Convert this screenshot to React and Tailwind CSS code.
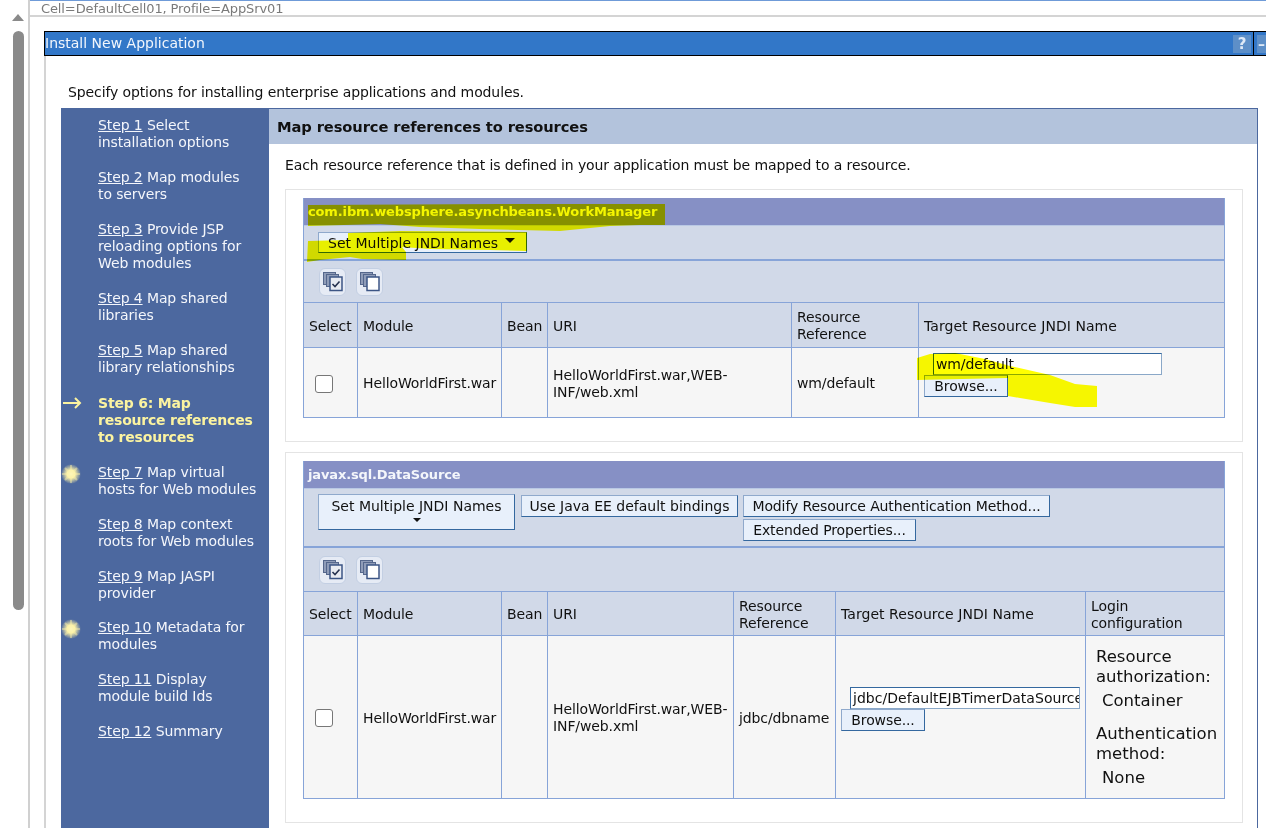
import React from 'react';

const steps = [
  { n: 'Step 1', lines: ['Select', 'installation options'] },
  { n: 'Step 2', lines: ['Map modules', 'to servers'] },
  { n: 'Step 3', lines: ['Provide JSP', 'reloading options for', 'Web modules'] },
  { n: 'Step 4', lines: ['Map shared', 'libraries'] },
  { n: 'Step 5', lines: ['Map shared', 'library relationships'] },
  { current: true, lines: ['Step 6: Map', 'resource references', 'to resources'] },
  { n: 'Step 7', lines: ['Map virtual', 'hosts for Web modules'], star: true },
  { n: 'Step 8', lines: ['Map context', 'roots for Web modules'] },
  { n: 'Step 9', lines: ['Map JASPI', 'provider'] },
  { n: 'Step 10', lines: ['Metadata for', 'modules'], star: true, tight: true },
  { n: 'Step 11', lines: ['Display', 'module build Ids'] },
  { n: 'Step 12', lines: ['Summary'] },
];

function Star() {
  return (
    <svg className="absolute left-[-38px] top-[-1px]" width="22" height="22" viewBox="0 0 22 22">
      <defs>
        <radialGradient id="glow">
          <stop offset="0%" stopColor="#fffcc8" />
          <stop offset="40%" stopColor="#fdf3a8" />
          <stop offset="100%" stopColor="#fdf3a8" stopOpacity="0" />
        </radialGradient>
      </defs>
      <circle cx="11" cy="11" r="10" fill="url(#glow)" />
      <path d="M11 2v18M2 11h18M5 5l12 12M17 5L5 17" stroke="#fbf0a8" strokeWidth="2" opacity="0.45" />
    </svg>
  );
}

function Sidebar() {
  return (
    <div className="w-[208px] shrink-0 bg-[#4c689f] pt-[9px] pl-[37px] flex flex-col gap-[18px] text-[#f4f6fb]">
      {steps.map((s, i) => (
        <div key={i} className={`relative leading-[17px] whitespace-nowrap ${s.current ? 'mt-px font-bold text-[#fbf3a0] tracking-[-0.2px]' : ''} ${s.tight ? '-mt-px' : ''}`}>
          {s.current && (
            <svg className="absolute left-[-37px] top-0" width="22" height="16" viewBox="0 0 22 16" fill="none" stroke="#fbf3a0" strokeWidth="2">
              <path d="M2 8h17M14 3l5 5-5 5" />
            </svg>
          )}
          {s.star && <Star />}
          {s.current ? (
            s.lines.map((l) => <div key={l}>{l}</div>)
          ) : (
            <>
              <div><span className="underline">{s.n}</span> {s.lines[0]}</div>
              {s.lines.slice(1).map((l) => <div key={l}>{l}</div>)}
            </>
          )}
        </div>
      ))}
    </div>
  );
}

function Btn({ className = '', children }) {
  return (
    <button className={`h-[22px] leading-[20px] bg-[#e8f0fb] border border-[#34689f] border-t-[#8fa9cc] border-l-[#8fa9cc] text-[#111] whitespace-nowrap ${className}`}>
      {children}
    </button>
  );
}

function IconBtn({ checked }) {
  return (
    <div className="w-[27px] h-[28px] rounded-[6px] bg-[#e6ebf5] border border-[#c3cfe3] flex items-center justify-center">
      <svg width="22" height="20" viewBox="0 0 22 20">
        <rect x="1.5" y="0.5" width="12" height="12" fill="#8f9cb8" stroke="#55678c" />
        <rect x="4.5" y="2.5" width="12" height="12" fill="#8f9cb8" stroke="#55678c" />
        <rect x="8" y="5" width="12" height="13.5" fill={checked ? '#e8ebf2' : '#fff'} stroke="#3c5585" strokeWidth="1.5" />
        {checked && <path d="M10.5 12l2.5 2.5 4.5-5" fill="none" stroke="#26324f" strokeWidth="1.6" />}
      </svg>
    </div>
  );
}

function Row({ className = '', children }) {
  return <div className={`flex border-t border-[#87a4d8] ${className}`}>{children}</div>;
}

function Cell({ w, head, className = '', children }) {
  return (
    <div className={`${w} shrink-0 flex items-center border-l border-[#87a4d8] first:border-l-0 px-[5px] pt-[2px] leading-[17px] ${head ? 'bg-[#d1d9e8] text-[#111]' : 'bg-[#f6f6f6] text-[#111]'} ${className}`}>
      {children}
    </div>
  );
}

function Check() {
  return <div className="w-[18px] h-[18px] ml-[6px] rounded-[3px] bg-white border border-[#777]" />;
}

function TitleBar({ children }) {
  return <div className="h-[27px] bg-[#8690c5] px-[4px] flex items-center font-bold text-[13px] text-[#f4f6fb] tracking-[-0.14px]">{children}</div>;
}

function IconRow({ h }) {
  return (
    <div className={`${h} border-t-2 border-[#87a4d8] bg-[#d1d9e8] pl-[15px] flex items-center gap-[10px]`}>
      <IconBtn checked />
      <IconBtn />
    </div>
  );
}

function FirstSection() {
  return (
    <div className="h-[253px] border border-[#e4e4e4] pt-[8px] pl-[17px]">
      <div className="w-[922px] border border-[#87a4d8] border-t-0">
        <TitleBar>com.ibm.websphere.asynchbeans.WorkManager</TitleBar>
        <div className="h-[34px] bg-[#d1d9e8] pl-[14px] pt-[6px] border-t border-[#b9c8e4]">
          <Btn className="w-[209px] !h-[21px] flex items-center pl-[9px] tracking-normal">
            Set Multiple JNDI Names
            <span className="ml-[7px] -mt-[4px] w-0 h-0 border-x-[5px] border-x-transparent border-t-[5px] border-t-[#111]" />
          </Btn>
        </div>
        <IconRow h="h-[43px]" />
        <Row>
          <Cell w="w-[53px]" head className="h-[44px]">Select</Cell>
          <Cell w="w-[144px]" head>Module</Cell>
          <Cell w="w-[46px]" head>Bean</Cell>
          <Cell w="w-[244px]" head>URI</Cell>
          <Cell w="w-[127px]" head>Resource<br />Reference</Cell>
          <Cell w="w-[306px]" head className="tracking-[0.05px]">Target Resource JNDI Name</Cell>
        </Row>
        <Row>
          <Cell w="w-[53px]" className="h-[69px]"><Check /></Cell>
          <Cell w="w-[144px]">HelloWorldFirst.war</Cell>
          <Cell w="w-[46px]"></Cell>
          <Cell w="w-[244px]"><span>HelloWorldFirst.war,WEB-<br />INF/web.xml</span></Cell>
          <Cell w="w-[127px]">wm/default</Cell>
          <Cell w="w-[306px]" className="!block !pt-[5px]">
            <div className="ml-[9px] w-[229px] h-[22px] leading-[20px] bg-white border border-[#8aa8c8] border-t-[#34689f] border-l-[#34689f] px-[2px]">wm/default</div>
            <Btn className="block w-[84px]">Browse...</Btn>
          </Cell>
        </Row>
      </div>
    </div>
  );
}

function SecondSection() {
  return (
    <div className="mt-[10px] h-[371px] border border-[#e4e4e4] pt-[8px] pl-[17px]">
      <div className="w-[922px] border border-[#87a4d8] border-t-0">
        <TitleBar>javax.sql.DataSource</TitleBar>
        <div className="h-[58px] bg-[#d1d9e8] pl-[14px] pt-[6px] border-t border-[#b9c8e4] flex gap-[6px]">
          <Btn className="w-[197px] !h-[36px] -mt-px flex flex-col items-center pt-px tracking-normal">
            Set Multiple JNDI Names
            <span className="mt-[2px] w-0 h-0 border-x-[4px] border-x-transparent border-t-[4px] border-t-[#111]" />
          </Btn>
          <Btn className="w-[217px] tracking-normal">Use Java EE default bindings</Btn>
          <div className="-ml-px flex flex-col items-start gap-[2px]">
            <Btn className="w-[307px]">Modify Resource Authentication Method...</Btn>
            <Btn className="w-[173px]">Extended Properties...</Btn>
          </div>
        </div>
        <IconRow h="h-[45px]" />
        <Row>
          <Cell w="w-[53px]" head className="h-[43px]">Select</Cell>
          <Cell w="w-[144px]" head>Module</Cell>
          <Cell w="w-[46px]" head>Bean</Cell>
          <Cell w="w-[186px]" head>URI</Cell>
          <Cell w="w-[102px]" head>Resource<br />Reference</Cell>
          <Cell w="w-[250px]" head className="tracking-[0.05px]">Target Resource JNDI Name</Cell>
          <Cell w="w-[139px]" head>Login<br />configuration</Cell>
        </Row>
        <Row>
          <Cell w="w-[53px]" className="h-[162px]"><Check /></Cell>
          <Cell w="w-[144px]">HelloWorldFirst.war</Cell>
          <Cell w="w-[46px]"></Cell>
          <Cell w="w-[186px]"><span>HelloWorldFirst.war,WEB-<br />INF/web.xml</span></Cell>
          <Cell w="w-[102px]">jdbc/dbname</Cell>
          <Cell w="w-[250px]" className="!block !pt-[51px]">
            <div className="ml-[9px] w-[230px] h-[22px] leading-[20px] bg-white border border-[#8aa8c8] border-t-[#34689f] border-l-[#34689f] px-[2px] overflow-hidden whitespace-nowrap tracking-[0.03px]">jdbc/DefaultEJBTimerDataSource</div>
            <Btn className="block w-[84px]">Browse...</Btn>
          </Cell>
          <Cell w="w-[139px]" className="!block !pt-[11px] !px-[10px] text-[16.5px] !leading-[20px] tracking-normal">
            <div>Resource<br />authorization:</div>
            <div className="mt-[4px] ml-[6px]">Container</div>
            <div className="mt-[13px]">Authentication<br />method:</div>
            <div className="mt-[4px] ml-[6px]">None</div>
          </Cell>
        </Row>
      </div>
    </div>
  );
}

export default function App() {
  return (
    <div className="relative w-[1266px] h-[828px] overflow-hidden bg-white flex text-[14px] text-[#111] tracking-[-0.11px]" style={{ fontFamily: '"DejaVu Sans", Verdana, sans-serif' }}>
      {/* scrollbar column */}
      <div className="w-[30px] shrink-0 border-r-2 border-[#d0d0d0] flex flex-col items-center pt-[14px] pl-[8px]">
        <div className="w-0 h-0 border-x-[6px] border-x-transparent border-b-[7px] border-b-[#8a8a8a]" />
        <div className="mt-[10px] w-[11px] h-[579px] rounded-[6px] bg-[#8a8a8a]" />
      </div>

      <div className="flex-1 min-w-0">
        <div className="h-[17px] border-t border-[#6f9bd8] border-b-2 border-b-[#d4d4d4] pl-[11px] pt-px text-[13px] leading-[14px] text-[#7a7a7a]">
          Cell=DefaultCell01, Profile=AppSrv01
        </div>

        <div className="mt-[14px] ml-[14px] h-[797px] border-l-2 border-[#d4d4d4]">
          {/* title bar runs past the right edge of the window */}
          <div className="-ml-[2px] w-[1229px] h-[25px] bg-[#3277c8] border border-black flex items-center text-[#f2f6fc] tracking-normal">
            <span className="flex-1">Install New Application</span>
            <div className="w-[18px] h-[18px] bg-[#5d8fc8] text-[#dfe9f6] font-bold text-[15px] leading-[18px] text-center">?</div>
            <div className="w-px h-full bg-black ml-[2px]" />
            <div className="w-[18px] h-[18px] ml-[3px] mr-[-3px] bg-[#5d8fc8] text-[#dfe9f6] font-bold leading-[18px] pl-[1px]">–</div>
          </div>

          <div className="pl-[22px] pt-[28px] leading-[17px]">Specify options for installing enterprise applications and modules.</div>

          <div className="ml-[15px] mt-[7px] w-[1197px] h-[720px] flex">
            <Sidebar />
            <div className="flex-1 border-r border-[#4c689f]">
              <div className="h-[36px] bg-[#b3c3dc] border-t border-[#4c689f] pl-[8px] pt-[2px] flex items-center font-bold text-[14.7px] text-[#111]">Map resource references to resources</div>
              <div className="pl-[16px] pt-[13px] leading-[17px]">Each resource reference that is defined in your application must be mapped to a resource.</div>
              <div className="ml-[16px] mt-[15px] w-[958px]">
                <FirstSection />
                <SecondSection />
              </div>
            </div>
          </div>
        </div>
      </div>

      {/* marker highlight drawn on the screenshot */}
      <svg className="absolute inset-0 mix-blend-multiply pointer-events-none" width="1266" height="828" viewBox="0 0 1266 828">
        <g fill="#ffff00">
          <path d="M308 205L500 204 665 204 665 225 640 225 610 226 560 231 480 229 420 227 380 224 308 226Z" />
          <path d="M348 233L400 231 527 232 527 251 490 250 430 249 402 247 406 252 406 260 362 259 350 257 320 260 307 262 308 241 348 240Z" />
          <path d="M917 358L930 354 955 353 985 359 1010 366 1050 375 1075 384 1097 386 1097 407 1075 407 1050 403 1020 398 1008 396 1008 378 917 380Z" />
        </g>
      </svg>
    </div>
  );
}
